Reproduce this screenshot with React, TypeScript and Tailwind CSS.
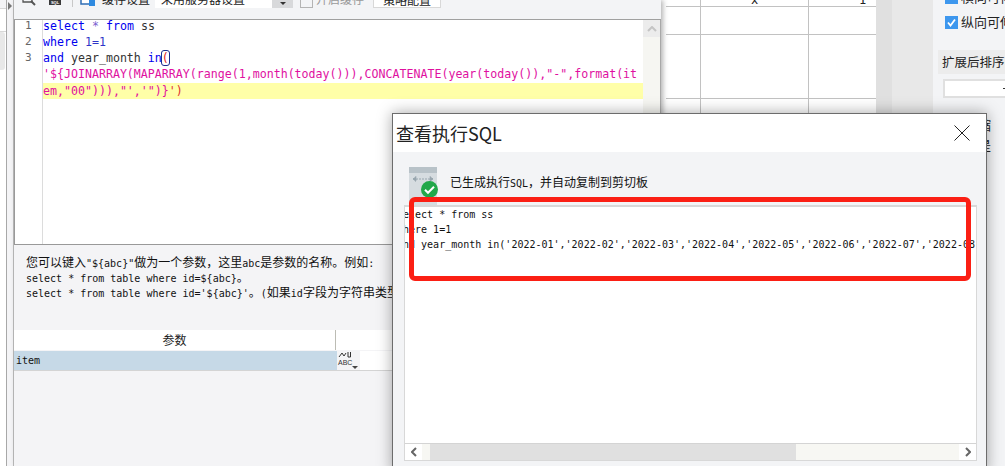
import React from "react";

const MONO = "font-['DejaVu_Sans_Mono','Noto_Sans_CJK_SC',monospace]";
const CJK = "font-['Noto_Sans_CJK_SC','Liberation_Sans',sans-serif]";

function Mixed({ s }: { s: string }) {
  const parts = s.split(/([\u3000-\u9fff\uff00-\uffef]+)/);
  return (
    <>
      {parts.map((p, i) =>
        i % 2 === 1 ? (
          <span key={i} className={`${CJK} text-[12px]`}>
            {p}
          </span>
        ) : (
          <span key={i}>{p}</span>
        )
      )}
    </>
  );
}

function Toolbar() {
  return (
    <div className="h-[20px] shrink-0 overflow-hidden border-b border-[#a0a0a0] bg-[#f3f4f6]">
      <div className={`-mt-[10px] flex h-[18px] items-center text-[12px] ${CJK}`}>
        <svg className="ml-[8px] shrink-0" width="14" height="14" viewBox="0 0 14 14">
          <path d="M1 1v9h9V1" fill="none" stroke="#555" strokeWidth="1.3" />
          <path d="M9 9l4 4" stroke="#555" strokeWidth="2" />
        </svg>
        <div className="ml-[13px] flex h-[12px] w-[12px] shrink-0 items-end justify-center overflow-hidden bg-[#3a3a3a] font-['Liberation_Sans',sans-serif] text-[4px] font-bold leading-[5px] text-white">
          SQL
        </div>
        <div className="ml-[11px] h-[16px] w-px shrink-0 bg-[#c8c8c8]" />
        <svg className="ml-[7px] shrink-0" width="16" height="16" viewBox="0 0 16 16">
          <rect x="1" y="1" width="11" height="12" fill="#fff" stroke="#2f6db5" strokeWidth="1.5" />
          <rect x="9" y="9" width="6" height="6" fill="#2f8ae0" />
        </svg>
        <span className="ml-[6px] w-[47px] whitespace-nowrap text-[#222]">缓存设置</span>
        <div className="ml-[6px] flex h-[18px] w-[138px] items-stretch bg-white">
          <span className="flex-1 whitespace-nowrap pl-[6px] text-[#222]">采用服务器设置</span>
          <div className="flex w-[21px] items-end justify-center bg-[#d8d9db] pb-[3px]">
            <div className="h-0 w-0 border-x-[3px] border-t-[3px] border-x-transparent border-t-[#333]" />
          </div>
        </div>
        <div className="ml-[7px] h-[18px] w-[13px] border border-[#b4b4b4] bg-[#f3f4f6]" />
        <span className="ml-[3px] w-[48px] whitespace-nowrap text-[#9a9a9a]">开启缓存</span>
        <div className="ml-[9px] flex h-[18px] w-[68px] justify-center whitespace-nowrap border border-[#d8d8d8] bg-white text-[#222]">
          策略配置
        </div>
      </div>
    </div>
  );
}

function CodeEditor() {
  const kw = "text-[#0000ee]";
  const str = "text-[#e0109f]";
  return (
    <div className="flex h-[225px] shrink-0 overflow-hidden border-b border-l border-[#999999] bg-white">
      <div className="w-[28px] shrink-0 border-r border-[#dcdcdc] pl-[10px] text-[11px] leading-[16px] text-[#666]">
        <div className={`-mt-[2px] ${MONO}`}>1</div>
        <div className={MONO}>2</div>
        <div className={MONO}>3</div>
      </div>
      <div className={`relative min-w-0 flex-1 text-[11.62px] leading-[16px] ${MONO} whitespace-pre text-[#333]`}>
        <div className="-mt-[2px]">
          <span className={kw}>select</span> <span className="text-[#7a5fd0]">*</span> <span className={kw}>from</span> ss
        </div>
        <div>
          <span className={kw}>where</span> <span className="text-[#2f35c8]">1=1</span>
        </div>
        <div>
          <span className={kw}>and</span> year_month <span className={kw}>in</span>
          <span className="-mx-px rounded-[3px] border border-[#1c2f8f] text-[#e02020]">(</span>
        </div>
        <div className={str}>{`'\${JOINARRAY(MAPARRAY(range(1,month(today())),CONCATENATE(year(today()),"-",format(it`}</div>
        <div className={`mt-[1px] bg-[#ffffa8] ${str}`}>
          {`em,"00"))),"','")}`}
          <span className="text-[#e03030]">')</span>
        </div>
      </div>
      <div className="flex w-[17px] shrink-0 flex-col bg-[#f6f6f2]">
        <div className="flex h-[17px] items-center justify-center bg-[#ececec]">
          <svg width="10" height="6" viewBox="0 0 10 6">
            <path d="M1 5l4-4 4 4" fill="none" stroke="#c4c4c4" strokeWidth="2" />
          </svg>
        </div>
      </div>
      <div className="w-px shrink-0 bg-[#a8a8a8]" />
    </div>
  );
}

function HelpAndParams() {
  return (
    <div className="flex min-h-0 flex-1 flex-col bg-[#f4f4f6]">
      <div className={`h-[85px] shrink-0 pl-[12px] pt-[9px] text-[10px] text-[#111] whitespace-nowrap ${MONO}`}>
        <div className="h-[15px] leading-[15px]">
          <Mixed s={'您可以键入"${abc}"做为一个参数，这里abc是参数的名称。例如:'} />
        </div>
        <div className="h-[15px] leading-[15px]">
          <Mixed s={"select * from table where id=${abc}。"} />
        </div>
        <div className="h-[15px] leading-[15px]">
          <Mixed s={"select * from table where id='${abc}'。(如果id字段为字符串类型)"} />
        </div>
      </div>
      <div className="flex h-[20px] shrink-0 bg-white">
        <div className={`flex w-[322px] items-center justify-center border-r border-[#bcbcb4] text-[12px] text-[#222] ${CJK}`}>
          参数
        </div>
      </div>
      <div className="mt-[1px] flex h-[20px] shrink-0 border-b border-[#d4d4d4]">
        <div className={`flex w-[323px] items-center bg-[#c6d9e7] pl-[2px] text-[10px] text-[#111] ${MONO}`}>item</div>
        <div className="relative flex w-[23px] flex-col items-start bg-[#f4f4f6] pl-[1px]">
          <svg width="14" height="8" viewBox="0 0 14 8" className="shrink-0">
            <path d="M1 6l3-4 2 3 2-3" fill="none" stroke="#333" strokeWidth="1" />
            <path d="M10 1v5h2.5v-5" fill="none" stroke="#333" strokeWidth="1" />
          </svg>
          <span className="font-['Liberation_Sans',sans-serif] text-[7px] leading-[8px] text-[#333]">ABC</span>
          <div className="absolute bottom-[1px] right-[2px] h-0 w-0 border-x-[3px] border-t-[3px] border-x-transparent border-t-[#444]" />
        </div>
        <div className="w-[40px] bg-white" />
      </div>
    </div>
  );
}

function Sheet() {
  const line = "border-[#c2c2c2]";
  const cols = [35, 108, 67];
  const rows = [7, 28, 64, 367];
  return (
    <div className="w-[210px] shrink-0 bg-white">
      {rows.map((h, r) => (
        <div key={r} className={`flex border-b ${line}`} style={{ height: h }}>
          {cols.map((w, c) => (
            <div
              key={c}
              className={`flex items-end justify-center overflow-hidden text-[12px] leading-[12px] text-[#222] ${c < 2 ? `border-r ${line}` : ""} ${MONO}`}
              style={{ width: w }}
            >
              {r === 0 && c === 1 ? "x" : r === 0 && c === 2 ? <span className="pl-[40px]">1</span> : ""}
            </div>
          ))}
        </div>
      ))}
    </div>
  );
}

function RightPanel() {
  return (
    <div className={`flex-1 overflow-hidden bg-[#f3f4f6] text-[13px] text-[#222] ${CJK}`}>
      <div className="-mt-[10px] flex h-[14px] items-center gap-[3px] whitespace-nowrap pl-[12px]">
        <div className="h-[13px] w-[13px] shrink-0 bg-[#3d97ee]" />
        横向可伸
      </div>
      <div className="mt-[11px] flex h-[14px] items-center gap-[3px] whitespace-nowrap pl-[12px]">
        <div className="flex h-[13px] w-[13px] shrink-0 items-center justify-center bg-[#3d97ee]">
          <svg width="11" height="11" viewBox="0 0 11 11">
            <path d="M2 5.5l2.5 3L9 2.5" fill="none" stroke="#fff" strokeWidth="1.8" />
          </svg>
        </div>
        纵向可伸
      </div>
      <div className="ml-[5px] mt-[21px] flex h-[24px] items-center whitespace-nowrap bg-[#ececec] pl-[4px] text-[12.5px]">
        扩展后排序
      </div>
      <div className="ml-[10px] mt-[5px] flex h-[19px] items-center justify-end whitespace-nowrap border-2 border-r-0 border-[#e0e0e0] bg-white text-[#222]">
        <span className="-mr-[2px] h-px w-[4px] bg-[#333]" />
      </div>
      <div className="ml-[45px] mt-[17px] whitespace-nowrap text-[13px] leading-[20px]">
        <div>缩</div>
        <div>是</div>
      </div>
    </div>
  );
}

function LeftStrip() {
  return (
    <div className="flex w-[14px] shrink-0">
      <div className="flex w-[7px] flex-col border-r border-[#a8a8a8] bg-white">
        <div className="h-[9px] border-b border-[#d8d8d8] bg-[#f4f4f6]" />
        <div className="h-[23px] border-b border-[#d8d8d8]" />
        <div className="h-[38px] w-[5px] rounded-r-[3px] bg-[#e8e8e8]" />
      </div>
      <div className="w-[7px] border-r border-[#bdbdbd] bg-[#f4f4f6] pl-[1px] pt-[2px]">
        <div className="h-0 w-0 border-y-[4px] border-l-[4px] border-y-transparent border-l-[#777]" />
      </div>
    </div>
  );
}

function Dialog() {
  const sql =
    "and year_month in('2022-01','2022-02','2022-03','2022-04','2022-05','2022-06','2022-07','2022-08','2022-09'";
  return (
    <div className="absolute left-[392px] top-[113px] z-20 flex h-[360px] w-[595px] flex-col border border-[#6c6c6c] bg-[#f3f4f6] shadow-[0_0_14px_rgba(0,0,0,0.35)]">
      <div className="flex h-[38px] shrink-0 items-center justify-between bg-white pl-[3px] pr-[16px]">
        <span className={`text-[18px] text-[#222] ${CJK}`}>查看执行SQL</span>
        <svg width="16" height="16" viewBox="0 0 16 16">
          <path d="M0.5 0.5l15 15M15.5 0.5l-15 15" stroke="#222" strokeWidth="1" />
        </svg>
      </div>
      <div className="flex h-[53px] shrink-0 pl-[16px] pt-[15px]">
        <div className="relative h-[38px] w-[28px] shrink-0 bg-[#d6dce0]">
          <div className="h-[6px] bg-[#b8c2c8]" />
          <svg className="mx-auto mt-[3px]" width="24" height="6" viewBox="0 0 24 6">
            <path d="M2 3h20M2 3l3-2.5v5zM22 3l-3-2.5v5z" stroke="#98a6ae" fill="#98a6ae" strokeWidth="1" strokeDasharray="2 1" />
          </svg>
          <svg className="absolute left-[12px] top-[14px]" width="17" height="17" viewBox="0 0 17 17">
            <circle cx="8.5" cy="8.5" r="8.5" fill="#22a84a" />
            <path d="M4 8.8l3 3 6-6" fill="none" stroke="#fff" strokeWidth="2" />
          </svg>
        </div>
        <div className={`ml-[13px] mt-[7px] h-[15px] whitespace-nowrap text-[10px] leading-[15px] text-[#111] ${MONO}`}>
          <Mixed s="已生成执行SQL，并自动复制到剪切板" />
        </div>
      </div>
      <div className="relative ml-[11px] flex h-[256px] w-[573px] shrink-0 flex-col border border-t-2 border-[#d8d8d8] bg-white">
        <div className={`min-h-0 flex-1 overflow-hidden whitespace-pre text-[10px] leading-[15px] text-[#111] ${MONO}`}>
          <div className="-ml-[8px]">select * from ss</div>
          <div className="-ml-[8px]">where 1=1</div>
          <div className="-ml-[8px]">{sql}</div>
        </div>
        <div className="flex h-[17px] shrink-0 border-t border-[#d4d4d4]">
          <div className="flex w-[17px] items-center justify-center bg-white">
            <svg width="6" height="10" viewBox="0 0 6 10">
              <path d="M5 1L1 5l4 4" fill="none" stroke="#666" strokeWidth="2" />
            </svg>
          </div>
          <div className="min-w-0 flex-1 bg-[#f7f7f3] pl-[8px]">
            <div className="h-full w-[366px] bg-[#e0e0e0]" />
          </div>
          <div className="flex w-[17px] items-center justify-center bg-white">
            <svg width="6" height="10" viewBox="0 0 6 10">
              <path d="M1 1l4 4-4 4" fill="none" stroke="#666" strokeWidth="2" />
            </svg>
          </div>
        </div>
      </div>
      <div className="absolute left-[16px] top-[83px] h-[84px] w-[562px] rounded-[6px] border-[5px] border-[#fb1f14]" />
    </div>
  );
}

export default function App() {
  return (
    <div className="relative flex h-[466px] w-[1005px] overflow-hidden bg-white">
      <LeftStrip />
      <div className="relative z-10 flex w-[647px] shrink-0 flex-col shadow-[2px_0_5px_rgba(0,0,0,0.3)]">
        <Toolbar />
        <CodeEditor />
        <HelpAndParams />
      </div>
      <div className="w-[5px] shrink-0" />
      <Sheet />
      <div className="w-[16px] shrink-0 bg-[#e0e0e0]" />
      <div className="w-[41px] shrink-0 bg-[#e8e8e8]" />
      <RightPanel />
      <Dialog />
    </div>
  );
}
